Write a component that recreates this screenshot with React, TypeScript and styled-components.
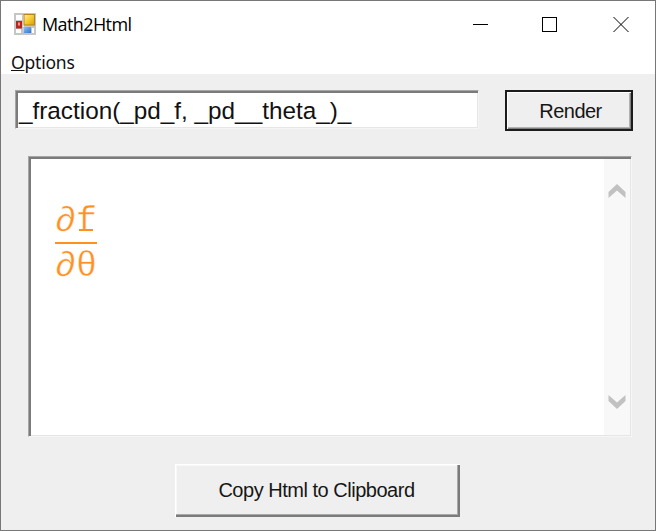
import React from "react";
import styled, { createGlobalStyle } from "styled-components";

const GlobalStyle = createGlobalStyle`
  * { box-sizing: border-box; }
  body { margin: 0; overflow: hidden; background: #efefef; }
`;

const Window = styled.main`
  width: 656px;
  height: 531px;
  border: 1px solid #777;
  background: #efefef;
  color: #111;
  font-family: "Liberation Sans", Arial, sans-serif;
`;

const TitleBar = styled.header`
  display: flex;
  align-items: center;
  height: 46px;
  padding-left: 13px;
  background: #fff;
`;

const Title = styled.h1`
  flex: 1;
  margin: 0 0 0 6px;
  font: 400 18px/24px "Open Sans", "Noto Sans", sans-serif;
  letter-spacing: -0.6px;
  color: #000;
`;

const Caption = styled.div`
  display: flex;
  gap: 56px;
  margin-right: 26px;

  svg:first-child { margin-right: -2px; }
`;

const MenuBar = styled.nav`
  height: 27px;
  padding: 3px 0 0 10px;
  background: #fff;
  font: 400 17.5px/24px "Noto Sans", sans-serif;
  letter-spacing: -0.2px;
`;

const MenuItem = styled.span`
  display: inline-block;
  &::first-letter { text-decoration: underline; }
`;

const Toolbar = styled.div`
  display: flex;
  align-items: flex-start;
  gap: 26px;
  padding: 16px 0 0 14px;
  height: 82px;
`;

const Field = styled.div`
  width: 464px;
  height: 39px;
  padding: 1px 0 0 3px;
  border: 1px solid;
  border-color: #a6a6a6 #f6f6f6 #f6f6f6 #a6a6a6;
  box-shadow: inset 2px 2px #7b7b7b, inset -1px -1px #e6e6e6;
  background: #fff;
  font-size: 24.3px;
  line-height: 37px;
  white-space: pre;
`;

const Button = styled.button<{ $primary?: boolean }>`
  display: block;
  width: ${(p) => (p.$primary ? 128 : 285)}px;
  height: ${(p) => (p.$primary ? 41 : 53)}px;
  margin: 0;
  padding: ${(p) => (p.$primary ? "0 0 0 3px" : "0 2px 1px 0")};
  border: ${(p) => (p.$primary ? "2px solid #1c1c1c" : "0")};
  box-shadow: ${(p) =>
    p.$primary
      ? "inset 1px 1px #fff, inset -1px -1px #808080, inset -2px -2px #b2b2b2"
      : "inset 1px 1px #fff, inset -2px -2px #7b7b7b, inset -3px -3px #a9a9a9, inset 2px 2px #f8f8f8"};
  background: #efefef;
  color: #161616;
  font: 400 20px/24px "Liberation Sans", Arial, sans-serif;
  letter-spacing: ${(p) => (p.$primary ? "-0.55px" : "-0.48px")};
`;

const Viewer = styled.section`
  display: flex;
  justify-content: space-between;
  width: 604px;
  height: 281px;
  margin-left: 27px;
  padding: 2px 1px 1px 2px;
  border: 1px solid;
  border-color: #a6a6a6 #f6f6f6 #f6f6f6 #a6a6a6;
  box-shadow: inset 2px 2px #7b7b7b, inset -1px -1px #e6e6e6;
  background: #fff;
`;

const Fraction = styled.div`
  width: 42px;
  margin: 40px 0 0 24px;
  color: #ff9021;
  font: 400 35px/47px "Liberation Mono", monospace;
  -webkit-text-stroke: 0.4px #fff;
`;

const Term = styled.div<{ $over?: boolean }>`
  height: ${(p) => (p.$over ? 45 : 44)}px;
  line-height: ${(p) => (p.$over ? 47 : 46)}px;
  border-bottom: ${(p) => (p.$over ? "2px solid #ff9021" : "0")};
`;

const SlabLetter = styled.span`
  position: relative;

  &::after {
    content: "";
    position: absolute;
    left: 3px;
    bottom: 11px;
    width: 14px;
    height: 2px;
    background: #ff9021;
  }
`;

const ScrollBar = styled.div`
  display: flex;
  flex-direction: column;
  justify-content: space-between;
  align-items: center;
  width: 26px;
  padding: 25px 0 26px;
  background: #f8f8f8;
`;

const Footer = styled.footer`
  padding: 27px 0 0 174px;
`;

function AppIcon() {
  return (
    <svg width="22" height="22" viewBox="0 0 22 22">
      <defs>
        <linearGradient id="gold" x1="0" y1="0" x2="1" y2="1">
          <stop offset="0" stopColor="#fff09a" />
          <stop offset="0.5" stopColor="#f7c934" />
          <stop offset="1" stopColor="#d99c08" />
        </linearGradient>
        <linearGradient id="blue" x1="0" y1="0" x2="1" y2="1">
          <stop offset="0" stopColor="#91c2ff" />
          <stop offset="1" stopColor="#3370d2" />
        </linearGradient>
      </defs>
      <rect width="22" height="22" fill="#c6c6c6" />
      <path d="M2 2h6v5H2zM2 16h5v4H2zM18 15h2v5h-2z" fill="#fff" />
      <path d="M9 2h1v12H9zM9 15h1v5H9z" fill="#f4f4f4" />
      <rect x="2" y="8" width="6" height="7.5" fill="#b9261c" />
      <rect x="4" y="9.5" width="2" height="3" fill="#ee9b8d" />
      <rect x="10" y="1.5" width="10.5" height="10.5" fill="url(#gold)" stroke="#b98414" />
      <rect x="9.5" y="14" width="7.5" height="6" fill="url(#blue)" />
    </svg>
  );
}

function Chevron({ down }: { down?: boolean }) {
  return (
    <svg width="18" height="14" viewBox="0 0 18 14">
      <path
        d={down ? "M0.5 0L9 7.5L17.5 0V6L9 14L0.5 6Z" : "M0.5 14L9 6.5L17.5 14V8L9 0L0.5 8Z"}
        fill="#c1c1c1"
      />
    </svg>
  );
}

export default function App() {
  return (
    <>
      <GlobalStyle />
      <Window>
        <TitleBar>
          <AppIcon />
          <Title>Math2Html</Title>
          <Caption>
            <svg width="15" height="15"><path d="M0 7.5H15" stroke="#000" /></svg>
            <svg width="15" height="15"><rect x=".5" y=".5" width="14" height="14" fill="none" stroke="#000" /></svg>
            <svg width="16" height="15"><path d="M.5 0L15.5 15M15.5 0L.5 15" stroke="#000" /></svg>
          </Caption>
        </TitleBar>
        <MenuBar><MenuItem>Options</MenuItem></MenuBar>
        <Toolbar>
          <Field>_fraction(_pd_f, _pd__theta_)_</Field>
          <Button $primary>Render</Button>
        </Toolbar>
        <Viewer>
          <Fraction>
            <Term $over>∂<SlabLetter>f</SlabLetter></Term>
            <Term>∂θ</Term>
          </Fraction>
          <ScrollBar>
            <Chevron />
            <Chevron down />
          </ScrollBar>
        </Viewer>
        <Footer>
          <Button>Copy Html to Clipboard</Button>
        </Footer>
      </Window>
    </>
  );
}
